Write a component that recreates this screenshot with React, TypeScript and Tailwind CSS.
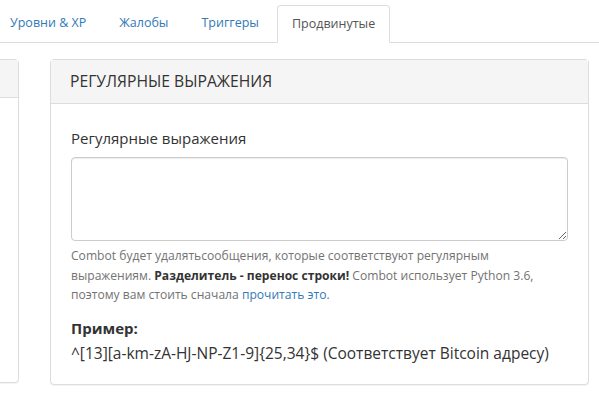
export default function App() {
  const tabs = ["Уровни & XP", "Жалобы", "Триггеры"];

  return (
    <div className="h-[395px] w-[599px] overflow-hidden bg-white font-['Open_Sans',sans-serif] text-[#333]">
      {/* Tabs */}
      <div className="flex h-[43px] items-end border-b border-[#ddd] pl-0">
        <div className="-ml-[5px] flex items-end">
          {tabs.map((t) => (
            <a
              key={t}
              className="mr-[3px] flex h-[37px] items-center px-[15px] text-[12.5px] text-[#337ab7]"
            >
              {t}
            </a>
          ))}
          <a className="-mb-px flex h-[38px] items-center rounded-t-[4px] border border-b-white border-[#ddd] bg-white px-[14px] text-[12.5px] text-[#555]">
            Продвинутые
          </a>
        </div>
      </div>

      {/* Panels */}
      <div className="mt-[16px] flex gap-[31px]">
        <div className="-ml-[100px] h-[324px] w-[119px] shrink-0 rounded-[4px] border border-[#ddd] bg-white shadow-[0_1px_1px_rgba(0,0,0,0.05)]">
          <div className="h-[38px] border-b border-[#ddd] bg-[#f5f5f5]" />
        </div>

        <div className="h-[326px] w-[539px] shrink-0 rounded-[4px] border border-[#ddd] bg-white shadow-[0_1px_1px_rgba(0,0,0,0.05)]">
          <div className="flex h-[44px] items-center border-b border-[#ddd] bg-[#f5f5f5] px-[19px] text-[15.7px] uppercase text-[#333]">
            Регулярные выражения
          </div>
          <div className="px-[20px] pt-[23px]">
            <label className="block text-[15px] leading-[22px]">Регулярные выражения</label>
            <textarea className="mt-[8px] block h-[84px] w-full rounded-[4px] border border-[#ccc] shadow-[inset_0_1px_1px_rgba(0,0,0,0.075)]" />
            <p className="mt-[5px] text-[12.1px] leading-[19.5px] text-[#737373]">
              Combot будет удалятьсообщения, которые соответствуют регулярным
              <br />
              выражениям. <b className="font-bold text-[#333]">Разделитель - перенос строки!</b> Combot
              использует Python 3.6,
              <br />
              поэтому вам стоить сначала <a className="text-[#337ab7]">прочитать это</a>.
            </p>
            <p className="mt-[13px] text-[15px] font-bold leading-[20px]">Пример:</p>
            <p className="mt-[5px] text-[15.5px] leading-[20px]">
              ^[13][a-km-zA-HJ-NP-Z1-9]{"{25,34}"}$ (Соответствует Bitcoin адресу)
            </p>
          </div>
        </div>
      </div>
    </div>
  );
}
